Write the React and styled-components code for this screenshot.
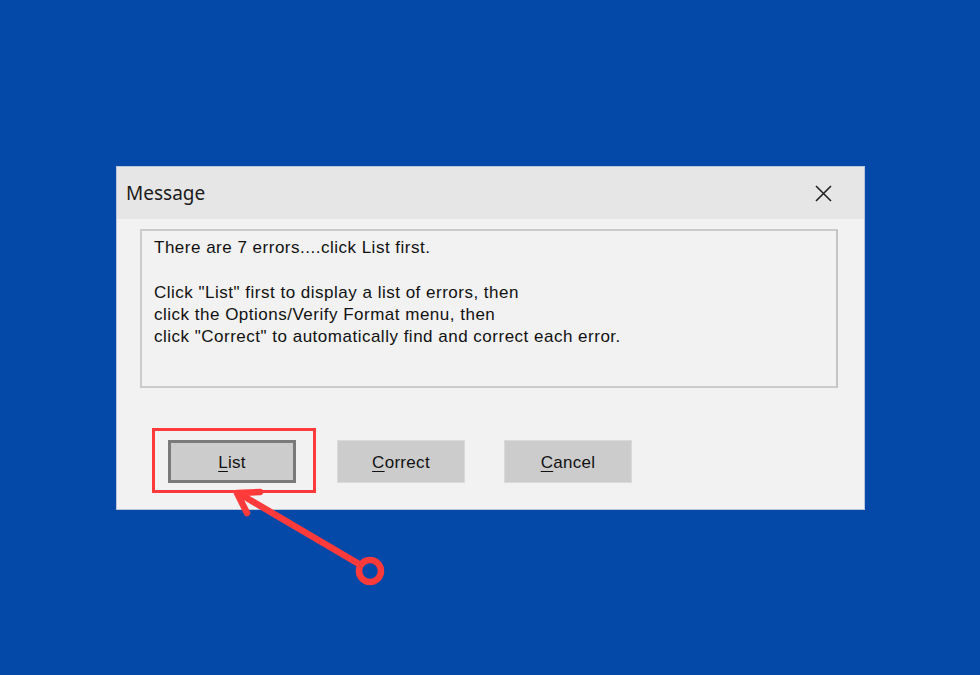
import React from "react"
import styled, { createGlobalStyle } from "styled-components"

const GlobalStyle = createGlobalStyle`
	html, body {
		margin: 0;
		padding: 0;
		background: #0549a8;
	}
`

const Page = styled.div`
	position: relative;
	width: 980px;
	height: 675px;
	background: #0549a8;
	padding: 166px 0 0 116px;
	box-sizing: border-box;
	overflow: hidden;
`

const Dialog = styled.div`
	width: 749px;
	height: 344px;
	box-sizing: border-box;
	border: 1px solid #b7c6dc;
	background: #f2f2f2;
	display: flex;
	flex-direction: column;
`

const TitleBar = styled.div`
	height: 52px;
	background: #e6e6e6;
	display: flex;
	align-items: center;
	justify-content: space-between;
	padding: 0 32px 0 9px;
	font-family: "Noto Sans", "Liberation Sans", sans-serif;
	font-size: 19px;
	color: #1a1a1a;
`

const CloseIcon = styled.svg`
	width: 17px;
	height: 17px;
	margin-top: 1px;
`

const Body = styled.div`
	flex: 1;
	padding: 10px 26px 0 23px;
	display: flex;
	flex-direction: column;
`

const MessageBox = styled.div`
	height: 159px;
	box-sizing: border-box;
	border: 2px solid #cbcbcb;
	border-right-color: #c4c4c4;
	padding: 6px 12px;
	font-family: "Liberation Sans", Arial, sans-serif;
	font-size: 17px;
	letter-spacing: 0.5px;
	line-height: 22px;
	color: #111;
`

const Line = styled.div`
	min-height: 22px;
	margin-bottom: ${ props => props.gap ? "23px" : "0" };
`

const ButtonRow = styled.div`
	display: flex;
	gap: 39px;
	margin-top: 52px;
	padding-left: 28px;
`

const Button = styled.button`
	width: 128px;
	height: 43px;
	box-sizing: border-box;
	background: #cccccc;
	border: ${ props => props.primary ? "3px solid #7a7a7a" : "1px solid #dadada" };
	margin-right: ${ props => props.primary ? "2px" : "0" };
	font-family: "Liberation Sans", Arial, sans-serif;
	font-size: 17px;
	letter-spacing: 0.3px;
	color: #111;
	padding: 3px 0 0;
	cursor: pointer;

	u {
		text-decoration-thickness: 1px;
		text-underline-offset: 3px;
	}
`

const Highlight = styled.div`
	position: absolute;
	left: 152px;
	top: 428px;
	width: 164px;
	height: 65px;
	box-sizing: border-box;
	border: 3px solid #ff3a3a;
	pointer-events: none;
`

const Overlay = styled.svg`
	position: absolute;
	left: 0;
	top: 0;
	width: 980px;
	height: 675px;
	pointer-events: none;
`

const App = () => {
	return (
		<>
			<GlobalStyle/>
			<Page>
				<Dialog>
					<TitleBar>
						<span>Message</span>
						<CloseIcon viewBox="0 0 17 17">
							<path d="M1 1 L16 16 M16 1 L1 16" stroke="#222" strokeWidth="1.6" fill="none"/>
						</CloseIcon>
					</TitleBar>
					<Body>
						<MessageBox>
							<Line gap>There are 7 errors....click List first.</Line>
							<Line>Click "List" first to display a list of errors, then</Line>
							<Line>click the Options/Verify Format menu, then</Line>
							<Line>click "Correct" to automatically find and correct each error.</Line>
						</MessageBox>
						<ButtonRow>
							<Button primary><u>L</u>ist</Button>
							<Button><u>C</u>orrect</Button>
							<Button><u>C</u>ancel</Button>
						</ButtonRow>
					</Body>
				</Dialog>
				<Highlight/>
				<Overlay viewBox="0 0 980 675">
					<g stroke="#ff3a3a" strokeWidth="6.5" strokeLinecap="round" strokeLinejoin="round" fill="none">
						<line x1="359" y1="564" x2="240" y2="494"/>
						<polyline points="260,492 237,493 247,513"/>
						<circle cx="370" cy="571" r="11"/>
					</g>
				</Overlay>
			</Page>
		</>
	)
}

export default App
